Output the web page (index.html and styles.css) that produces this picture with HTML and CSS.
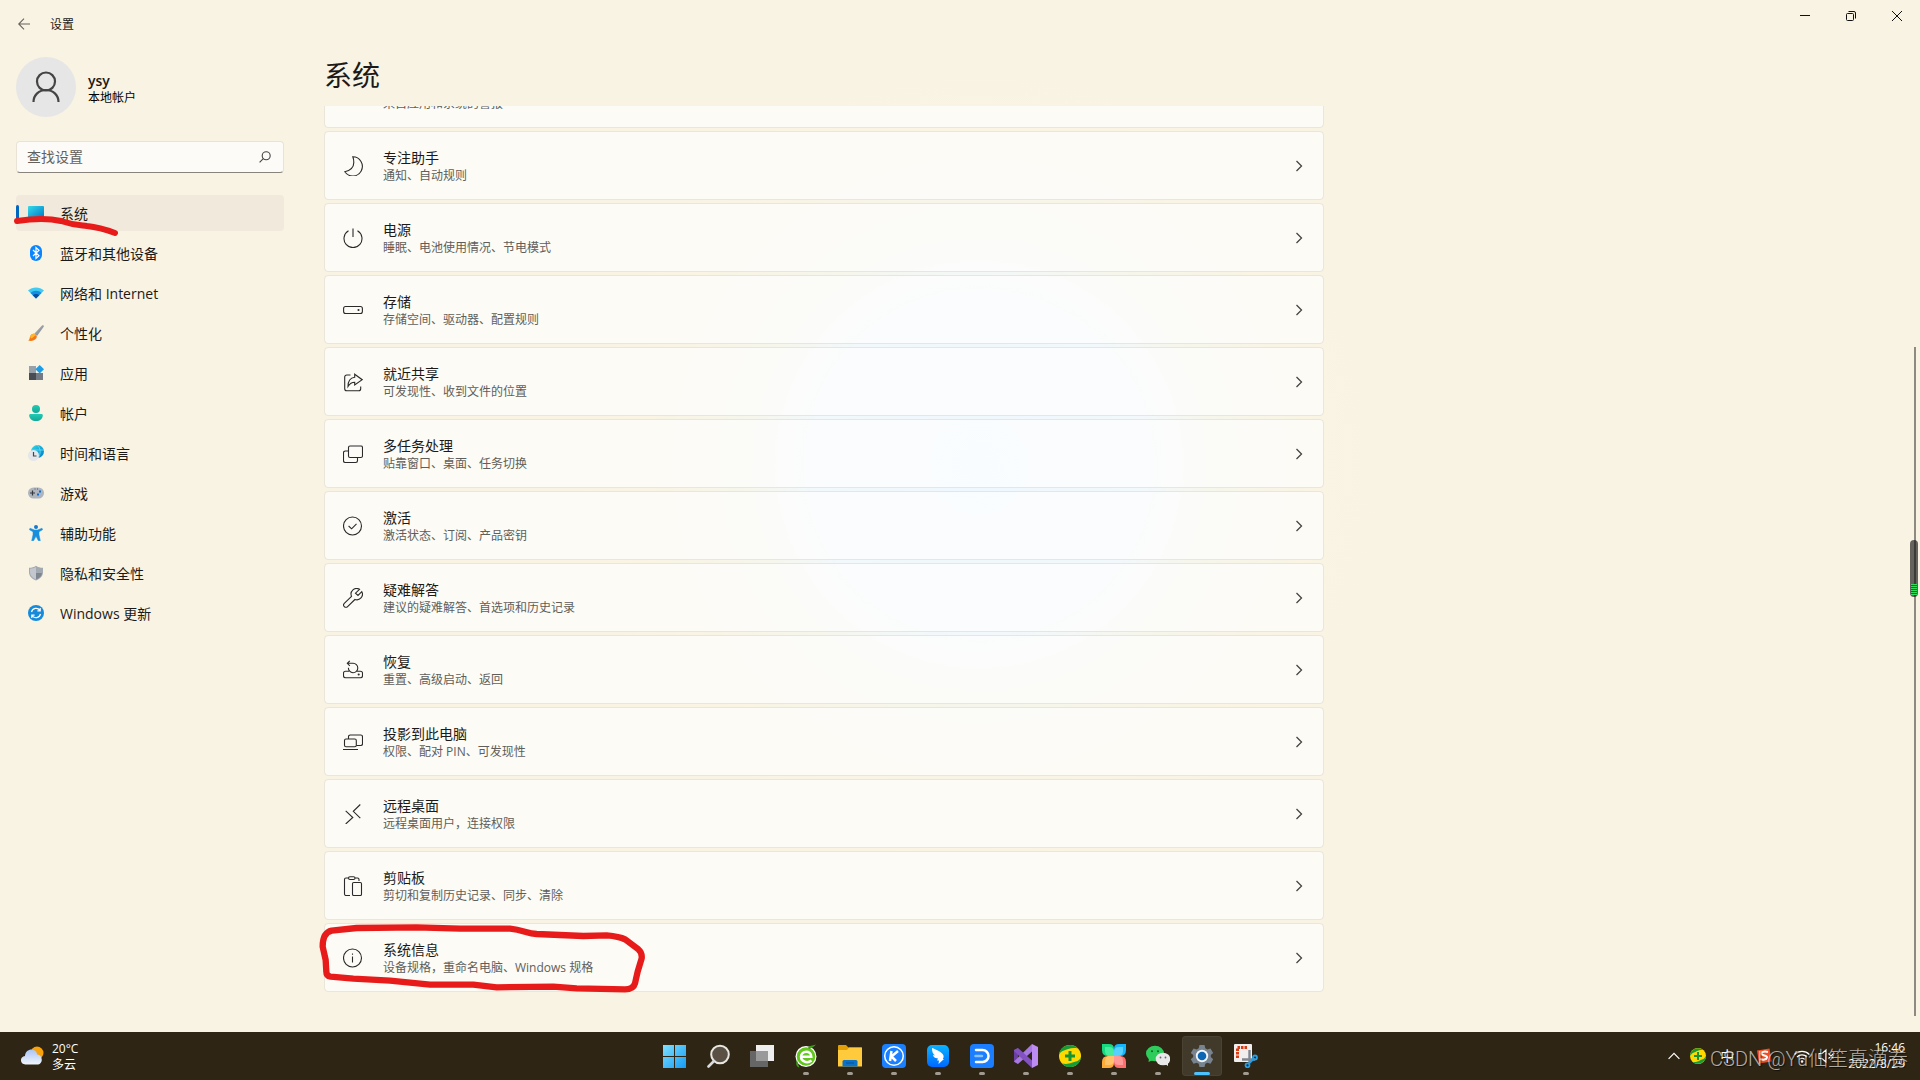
FILE: index.html
```html
<!DOCTYPE html>
<html lang="zh-CN">
<head>
<meta charset="utf-8">
<meta name="viewport" content="width=device-width, initial-scale=1">
<title>设置</title>
<link rel="stylesheet" href="styles.css">
</head>
<body>
<svg class="defs" aria-hidden="true">
  <defs>
    <symbol id="chevron" viewBox="0 0 12 12"><path d="M3.500 1l5 5-5 5" fill="none" stroke="#444" stroke-width="1.300"/></symbol>
    <linearGradient id="g-cyan" x1="0" y1="0" x2="1" y2="1"><stop offset="0" stop-color="#35dbe8"/><stop offset="1" stop-color="#0078c8"/></linearGradient>
    <linearGradient id="g-steel" x1="0" y1="0" x2="1" y2="1"><stop offset="0" stop-color="#b9bfc7"/><stop offset="1" stop-color="#747b85"/></linearGradient>
    <linearGradient id="g-teal" x1="0" y1="0" x2="0" y2="1"><stop offset="0" stop-color="#22cbb4"/><stop offset="1" stop-color="#13a898"/></linearGradient>
    <linearGradient id="g-win" x1="0" y1="0" x2="1" y2="1"><stop offset="0" stop-color="#7fe0ff"/><stop offset="1" stop-color="#149bf5"/></linearGradient>
    <linearGradient id="g-cloud" x1="0" y1="0" x2="0" y2="1"><stop offset="0" stop-color="#a9c4f5"/><stop offset="1" stop-color="#f2f6fd"/></linearGradient>
    <linearGradient id="g-blue" x1="0" y1="0" x2="0" y2="1"><stop offset="0" stop-color="#0ab4ff"/><stop offset="1" stop-color="#0068ff"/></linearGradient>
  </defs>
</svg>

<div class="window">
  <header class="titlebar">
    <button class="back" aria-label="返回"><svg width="12" height="12" viewBox="0 0 12 12"><path d="M12 6H.7M6 .7L.7 6 6 11.300" fill="none" stroke="#66635c" stroke-width="1.100"/></svg></button>
    <span class="app-name">设置</span>
    <div class="controls">
      <button aria-label="最小化"><svg width="10" height="10" viewBox="0 0 10 10"><path d="M0 4.500h10" stroke="#111"/></svg></button>
      <button aria-label="还原"><svg width="10" height="10" viewBox="0 0 10 10"><g fill="none" stroke="#111"><rect x=".5" y="2.500" width="7" height="7" rx="1"/><path d="M2.500.5H8a1.500 1.500 0 0 1 1.500 1.500v5.500"/></g></svg></button>
      <button aria-label="关闭"><svg width="10" height="10" viewBox="0 0 10 10"><path d="M0 0l10 10M10 0L0 10" stroke="#111"/></svg></button>
    </div>
  </header>

  <div class="body">
    <aside class="sidebar">
      <div class="profile">
        <span class="avatar"><svg width="30" height="32" viewBox="0 0 30 32"><g fill="none" stroke="#444" stroke-width="2.200"><circle cx="15" cy="10.500" r="9"/><path d="M2.500 31c0-7 5.500-12 12.500-12s12.500 5 12.500 12"/></g></svg></span>
        <div class="who"><strong class="user">ysy</strong><span class="account">本地帐户</span></div>
      </div>
      <label class="search">
        <input type="text" placeholder="查找设置" aria-label="查找设置">
        <svg width="12" height="12" viewBox="0 0 12 12"><g fill="none" stroke="#444" stroke-width="1.100"><circle cx="7.200" cy="4.800" r="4"/><path d="M4.300 7.700L.6 11.400"/></g></svg>
      </label>
      <nav class="nav">
        <a class="current" href="#system">
          <svg width="16" height="16" viewBox="0 0 16 16"><rect y="1" width="16" height="12" rx="1" fill="url(#g-cyan)"/><path d="M4 13h8v2H4z" fill="#667"/></svg><span>系统</span>
          <svg class="stroke" width="106" height="24" viewBox="0 0 106 24"><path d="M4 6C18 4 34 3 48 6C60 10 66 10 74 11C84 12 94 15 102 18" fill="none" stroke="#e71c1a" stroke-width="6" stroke-linecap="round"/></svg>
        </a>
        <a href="#bluetooth"><svg width="16" height="16" viewBox="0 0 16 16"><rect x="2" width="12" height="16" rx="6" fill="#0a84ff"/><path d="M5 5l6 5.800-3 2.700v-11l3 2.700L5 11" fill="none" stroke="#fff" stroke-width="1.200"/></svg><span>蓝牙和其他设备</span></a>
        <a href="#network"><svg width="16" height="16" viewBox="0 0 16 16"><path d="M0 5.500C4.500 1.500 11.500 1.500 16 5.500L8 13.500z" fill="#41cbf2"/><path d="M2.500 8C5.500 5 10.500 5 13.500 8L8 13.500z" fill="#168ee0"/><path d="M4.700 10.300c1.800-1.800 4.800-1.800 6.600 0L8 13.600z" fill="#0b50a0"/></svg><span>网络和 Internet</span></a>
        <a href="#personal"><svg width="16" height="16" viewBox="0 0 16 16"><path d="M14 .5c1-.8 2.300.2 1.700 1.300L9 11 6.200 8.700z" fill="url(#g-steel)"/><path d="M5.800 8.800L8.800 11.300c.3 3-3.800 5.700-8.600 4.200 1.600-.8 1.200-1.700 1.700-3.500.5-2 2-3.400 3.900-3.200z" fill="#f27a16"/><path d="M5.800 8.800l1.700 1.400-4 3.300-1.500-1.400c.5-2 1.900-3.500 3.800-3.300z" fill="#fdb72d"/></svg><span>个性化</span></a>
        <a href="#apps"><svg width="16" height="16" viewBox="0 0 16 16"><path d="M1 1h7v7H1z" fill="#98a0aa"/><path d="M1 8h7v7H1z" fill="#484d54"/><path d="M8 8h7v7H8z" fill="#747b85"/><path d="M11.700 0L16 4.300 11.700 8.600 7.400 4.300z" fill="#1b9de8"/></svg><span>应用</span></a>
        <a href="#accounts"><svg width="16" height="16" viewBox="0 0 16 16"><circle cx="8" cy="4" r="4" fill="url(#g-teal)"/><path d="M2.500 9h11c1 0 1.300.7 1.300 1.500C14.500 14 12 16 8 16s-6.500-2-6.800-5.500C1.200 9.700 1.500 9 2.500 9z" fill="url(#g-teal)"/></svg><span>帐户</span></a>
        <a href="#time"><svg width="16" height="16" viewBox="0 0 16 16"><circle cx="9.500" cy="6.500" r="6.500" fill="url(#g-cyan)"/><path d="M3 5h13M9 0c4 3 4 9 1 13" fill="none" stroke="#65dff4" stroke-width=".8"/><circle cx="5.500" cy="10.500" r="5.500" fill="#e3e6ea"/><path d="M5.500 7v4h3" fill="none" stroke="#444" stroke-width="1.200"/></svg><span>时间和语言</span></a>
        <a href="#gaming"><svg width="16" height="16" viewBox="0 0 16 16"><rect y="2.500" width="16" height="11" rx="5.500" fill="#aeb5bf"/><path d="M4.500 5.500v5M2 8h5" stroke="#34383d" stroke-width="1.200"/><path d="M6.500 4h1M9 4h1" stroke="#555"/><rect x="11" y="5.500" width="2" height="2" fill="#0c6fd0"/><rect x="9" y="8.500" width="2" height="2" fill="#0c6fd0"/></svg><span>游戏</span></a>
        <a href="#access"><svg width="16" height="16" viewBox="0 0 16 16"><circle cx="8" cy="2" r="2" fill="#147bd1"/><path d="M2 3.200L6.500 5h3L14 3.200l.6 1.500L11 6.700v3l1.300 6h-1.900L8 11.200 5.600 15.700H3.700l1.300-6v-3L1.400 4.700z" fill="#188edf" stroke="#188edf" stroke-width=".5"/></svg><span>辅助功能</span></a>
        <a href="#privacy"><svg width="16" height="16" viewBox="0 0 16 16"><path d="M8 .8c2 1.500 4.200 2 7 2V7c0 4-2.500 6.500-7 8.500C3.500 13.500 1 11 1 7V2.800c2.800 0 5-.5 7-2z" fill="#a3a9b1"/><path d="M8 2v12.500C4 12.500 2 10.500 2 7V3.700C4.500 3.600 6.200 3.100 8 2z" fill="#c2c7cd"/><path d="M8 8h6c-.4 3.200-2.300 5-6 6.500z" fill="#7f868f"/></svg><span>隐私和安全性</span></a>
        <a href="#update"><svg width="16" height="16" viewBox="0 0 16 16"><circle cx="8" cy="8" r="8" fill="#168bdc"/><path d="M3.500 7a4.700 4.700 0 0 1 8.500-1.500M12.500 9A4.700 4.700 0 0 1 4 10.500M12.200 3v2.800H9.400M3.800 13v-2.800h2.800" fill="none" stroke="#fff" stroke-width="1.200"/></svg><span>Windows 更新</span></a>
      </nav>
    </aside>

    <main class="main">
      <h1>系统</h1>
      <div class="list">
        <button class="card"><span class="icon"></span><span class="text"><b>通知</b><small>来自应用和系统的警报</small></span><svg class="go"><use href="#chevron"/></svg></button>
        <button class="card"><svg class="icon" viewBox="0 0 20 20"><path d="M9.800.8A9.600 9.600 0 1 1 1.800 15.800C7 14.500 10.800 11 10.800 6.500c0-2.500-.3-4-1-5.700z"/></svg><span class="text"><b>专注助手</b><small>通知、自动规则</small></span><svg class="go"><use href="#chevron"/></svg></button>
        <button class="card"><svg class="icon" viewBox="0 0 20 20"><path d="M10 .5v8.500M5.500 2.800a9 9 0 1 0 9 0"/></svg><span class="text"><b>电源</b><small>睡眠、电池使用情况、节电模式</small></span><svg class="go"><use href="#chevron"/></svg></button>
        <button class="card"><svg class="icon" viewBox="0 0 20 20"><rect x=".6" y="6.500" width="18.800" height="7" rx="2"/><circle cx="15.500" cy="10" r=".5"/></svg><span class="text"><b>存储</b><small>存储空间、驱动器、配置规则</small></span><svg class="go"><use href="#chevron"/></svg></button>
        <button class="card"><svg class="icon" viewBox="0 0 20 20"><path d="M7.500 3H3.700a2 2 0 0 0-2 2v11.800a2 2 0 0 0 2 2h12a2 2 0 0 0 2-2V14.500M11.700 2.200l7.500 5.500-7.500 5.300V10.300c-3.200 0-5 1.500-6.700 4.200 0-5.500 2.500-8.800 6.700-9.300z"/></svg><span class="text"><b>就近共享</b><small>可发现性、收到文件的位置</small></span><svg class="go"><use href="#chevron"/></svg></button>
        <button class="card"><svg class="icon" viewBox="0 0 20 20"><rect x="5.500" y="2" width="14" height="11.500" rx="1.500"/><path d="M5.500 7H2.200A1.700 1.700 0 0 0 .5 8.700v8.100a1.700 1.700 0 0 0 1.700 1.700h10.600a1.700 1.700 0 0 0 1.700-1.700V13.500"/></svg><span class="text"><b>多任务处理</b><small>贴靠窗口、桌面、任务切换</small></span><svg class="go"><use href="#chevron"/></svg></button>
        <button class="card"><svg class="icon" viewBox="0 0 20 20"><circle cx="9.500" cy="10" r="9"/><path d="M5.600 10l3 2.800 4.900-5"/></svg><span class="text"><b>激活</b><small>激活状态、订阅、产品密钥</small></span><svg class="go"><use href="#chevron"/></svg></button>
        <button class="card"><svg class="icon" viewBox="0 0 20 20"><path d="M16.500 1.300A5.600 5.600 0 0 0 8.500 8.300L1.300 15.300a2.200 2.200 0 0 0 3.300 3.300L11.900 11.500A5.600 5.600 0 0 0 18.800 3.700L15 7.500 12.500 5.200z"/></svg><span class="text"><b>疑难解答</b><small>建议的疑难解答、首选项和历史记录</small></span><svg class="go"><use href="#chevron"/></svg></button>
        <button class="card"><svg class="icon" viewBox="0 0 20 20"><path d="M6 11.200H2.500a2 2 0 0 0-2 2v2.600a2 2 0 0 0 2 2h15a2 2 0 0 0 2-2v-2.600a2 2 0 0 0-2-2H14M6.800.8L4.300 3.300l2.500 2.500M4.300 3.300H10a4.700 4.700 0 1 1-4.600 4.500"/><circle cx="15.700" cy="14.500" r=".5"/></svg><span class="text"><b>恢复</b><small>重置、高级启动、返回</small></span><svg class="go"><use href="#chevron"/></svg></button>
        <button class="card"><svg class="icon" viewBox="0 0 20 20"><rect x="1.500" y="7" width="11.800" height="7.800" rx="1.500"/><path d="M5.500 7V4.700A1.700 1.700 0 0 1 7.200 3h10.600a1.700 1.700 0 0 1 1.700 1.700v7.100a1.700 1.700 0 0 1-1.700 1.700h-4.500M0 17.500h15"/></svg><span class="text"><b>投影到此电脑</b><small>权限、配对 PIN、可发现性</small></span><svg class="go"><use href="#chevron"/></svg></button>
        <button class="card"><svg class="icon" viewBox="0 0 20 20"><path d="M2.700 6.800l7.100 6.700-7.100 6.500M17.300.5l-7 6.800 7 6.900"/></svg><span class="text"><b>远程桌面</b><small>远程桌面用户，连接权限</small></span><svg class="go"><use href="#chevron"/></svg></button>
        <button class="card"><svg class="icon" viewBox="0 0 20 20"><rect x="5.500" y=".7" width="6.500" height="2.800" rx="1.400"/><path d="M5.500 2H3a1.500 1.500 0 0 0-1.500 1.500V18A1.500 1.500 0 0 0 3 19.500h4M12 2h2.500A1.500 1.500 0 0 1 16 3.500V5"/><rect x="9.500" y="6.500" width="9" height="13" rx="1.200"/></svg><span class="text"><b>剪贴板</b><small>剪切和复制历史记录、同步、清除</small></span><svg class="go"><use href="#chevron"/></svg></button>
        <button class="card"><svg class="icon" viewBox="0 0 20 20"><circle cx="9.500" cy="10" r="9"/><path d="M9.500 8.500v6M9.500 5.500v1.200"/></svg><span class="text"><b>系统信息</b><small>设备规格，重命名电脑、Windows 规格</small></span><svg class="go"><use href="#chevron"/></svg>
          <svg class="ring" width="333" height="79" viewBox="12 657 999 237"><path d="M140 684L320 682 450 686 600 686C640 690 650 700 680 702L820 708 890 706C915 708 930 710 945 718L985 748Q997 758 995 775L983 815 975 850Q970 868 945 868L800 865 730 860 560 862 490 854 360 854 240 842 130 836 62 830Q49 828 49 815L47 780 38 740Q38 698 65 692Z" fill="none" stroke="#e71c1a" stroke-width="19" stroke-linejoin="round"/></svg>
        </button>
      </div>
    </main>
  </div>

  <div class="scrollbar"><span class="gauge"></span></div>
</div>

<footer class="taskbar">
  <button class="weather">
    <svg width="24" height="20" viewBox="0 0 24 20"><circle cx="17" cy="7" r="6.500" fill="#f9a20b"/><path d="M5.500 18.500C-.5 18.500-.5 10.500 5 10 5.500 2 16 1.500 17.200 8.500c6 .5 6.300 10-.2 10z" fill="url(#g-cloud)"/></svg>
    <span class="forecast"><span>20°C</span><span>多云</span></span>
  </button>
  <div class="apps">
    <button aria-label="开始"><svg viewBox="0 0 24 24"><path d="M1 1h11v11H1zM13 1h11v11H13zM1 13h11v11H1zM13 13h11v11H13z" fill="url(#g-win)"/></svg></button>
    <button aria-label="搜索"><svg viewBox="0 0 24 24"><circle cx="14" cy="10.500" r="8.800" fill="#5a5144" stroke="#e8e6e2" stroke-width="2"/><path d="M8 17l-5.500 5.500" stroke="#d8dadd" stroke-width="2.600" stroke-linecap="round"/></svg></button>
    <button aria-label="任务视图"><svg viewBox="0 0 24 24"><rect x="6" y="1" width="18" height="16" fill="#eee"/><rect x="0" y="7" width="18" height="16" fill="#666"/><rect x="6" y="7" width="12" height="10" fill="#999"/></svg></button>
    <button class="open" aria-label="浏览器"><svg viewBox="0 0 24 24"><circle cx="12" cy="12.500" r="10.500" fill="#fff"/><circle cx="12" cy="12.500" r="9.300" fill="#62c61c"/><path d="M17.500 16.500C13 20 7 17.500 7 12.500 7.500 6.500 17 6 17.300 12.800H8" fill="none" stroke="#fff" stroke-width="2.500"/><path d="M14 3C17 1.500 19.500 1 22 .5 20 3 18 4 15 5zM5.500 23.500C2 23 1.500 19 3 15.500 3.500 19 4.500 21 5.500 23.500z" fill="#3c9d19"/></svg></button>
    <button class="open" aria-label="文件资源管理器"><svg viewBox="0 0 24 24"><path d="M0 2q0-1 1-1h7l2.500 2.500H23q1 0 1 1V22H0z" fill="#e2a008"/><path d="M0 6h9l2-2.500h13V22.500H0z" fill="#ffca3c"/><path d="M4.500 22.500v-5q0-1.500 1.500-1.500h12q1.500 0 1.500 1.500v5z" fill="#0c72c8"/><path d="M8 19h8" stroke="#074f96"/></svg></button>
    <button class="open" aria-label="酷狗音乐"><svg viewBox="0 0 24 24"><rect width="24" height="24" rx="4" fill="#1a80ff"/><circle cx="12" cy="12" r="9.300" fill="none" stroke="#fff" stroke-width="1.500"/><path d="M9.500 7L8 17M16 7l-6.500 5.500L14 17" fill="none" stroke="#fff" stroke-width="2.500"/></svg></button>
    <button class="open" aria-label="钉钉"><svg viewBox="0 0 24 24"><rect x="1" y="1" width="22" height="22" rx="5" fill="url(#g-blue)"/><path d="M6 4c4 1.500 9 3.500 11 6.500 1 1.500.7 3-.2 4.500h1.200l-5.500 5 .5-3.500h-2l1-2C8.500 14 7 12.500 7 11l2 .5C7 10 6 8 6 4z" fill="#fff"/></svg></button>
    <button class="open" aria-label="文档"><svg viewBox="0 0 24 24"><rect width="24" height="24" rx="4" fill="#1b7eff"/><path d="M6 6h6.500a6 6 0 0 1 0 12H6" fill="none" stroke="#fff" stroke-width="2.500" stroke-linecap="round"/><path d="M5.500 12H12" stroke="#8ac2ff" stroke-width="2.500" stroke-linecap="round"/></svg></button>
    <button class="open" aria-label="Visual Studio"><svg viewBox="0 0 24 24"><path d="M18 0l6 3v18l-6 3z" fill="#bd8cf2"/><path d="M0 6l4-2v16l-4-2z" fill="#6b3fa0"/><path d="M4 20L18 7.500V0L0 17.500z" fill="#a678e0"/><path d="M0 6l4-2 14 12.500V24L0 7z" fill="#8252c0"/></svg></button>
    <button class="open" aria-label="安全卫士"><svg viewBox="0 0 24 24"><circle cx="12" cy="12" r="11" fill="#ffd800"/><path d="M1 11A11 11 0 0 1 20 4.500C13 3 9 6 6 6.500 3 7 2 9 1 11zM23 13A11 11 0 0 1 4 19.500C11 21 15 18 18 17.500c3-.5 4-2.500 5-4.500z" fill="#159b3a"/><path d="M12 7v10M7 12h10" stroke="#169332" stroke-width="3"/></svg></button>
    <button class="open" aria-label="应用中心"><svg viewBox="0 0 24 24"><path d="M0 0h7q5 0 5 5v7H6q-6 0-6-6z" fill="#17d980"/><path d="M24 0h-7q-5 0-5 5v7h6q6 0 6-6z" fill="#16b6ff"/><path d="M0 24h7q5 0 5-5v-7H6q-6 0-6 6z" fill="#ffac36"/><path d="M24 24h-7q-5 0-5-5v-7h6q6 0 6 6z" fill="#ff6f70"/><path d="M3 3h4q5 0 5 5v4H8q-5 0-5-5z" fill="#48ec9d"/><path d="M21 3h-4q-5 0-5 5v4h4q5 0 5-5z" fill="#57d1ff"/><path d="M3 21h4q5 0 5-5v-4H8q-5 0-5 5z" fill="#ffc46b"/><path d="M21 21h-4q-5 0-5-5v-4h4q5 0 5 5z" fill="#ff9a98"/></svg></button>
    <button class="open" aria-label="微信"><svg viewBox="0 0 24 24"><ellipse cx="9" cy="9.500" rx="9" ry="7.800" fill="#2ecc5a"/><path d="M3 14l-.5 4L7 16z" fill="#2ecc5a"/><circle cx="6" cy="7.300" r="1" fill="#165d29"/><circle cx="12" cy="7.300" r="1" fill="#165d29"/><ellipse cx="17" cy="15" rx="7.300" ry="6.300" fill="#e8e8e8"/><path d="M19 20l3 2v-4z" fill="#e8e8e8"/><circle cx="14.500" cy="13.500" r=".9" fill="#666"/><circle cx="19.500" cy="13.500" r=".9" fill="#666"/></svg></button>
    <button class="open active" aria-label="设置"><svg viewBox="0 0 24 24"><path d="M9.500 1h5l.8 3.300 2 1.100 3.200-1 2.700 4.500L20.800 11v2l2.400 2.200-2.700 4.500-3.200-1-2 1.100L14.500 23h-5l-.8-3.200-2-1.100-3.200 1L.8 15.200 3.200 13v-2L.8 8.900l2.700-4.500 3.200 1 2-1.100z" fill="#788390"/><circle cx="12" cy="12" r="6.200" fill="#f2f4f6"/><circle cx="12" cy="12" r="4.300" fill="#0d66b4"/></svg></button>
    <button class="open" aria-label="截图工具"><svg viewBox="0 0 24 24"><rect width="18" height="18" rx="1" fill="#f0efee"/><path d="M3.500 14V3.500H14" fill="none" stroke="#d83b12" stroke-width="3" stroke-dasharray="2.500 1"/><path d="M15.500 6v13M8 15.500h13" stroke="#7f8890" stroke-width="2.400"/><g fill="none" stroke="#24a0e8" stroke-width="1.800"><circle cx="21" cy="13.500" r="2"/><circle cx="13.500" cy="21.300" r="2"/><path d="M15 19.500l4.500-4.500"/></g></svg></button>
  </div>
  <div class="tray">
    <button aria-label="显示隐藏的图标"><svg width="12" height="8" viewBox="0 0 12 8"><path d="M.6 6.800L6 1.400l5.400 5.400" fill="none" stroke="#fff" stroke-width="1.200"/></svg></button>
    <button aria-label="安全防护"><svg width="16" height="16" viewBox="0 0 16 16"><circle cx="8" cy="8" r="8" fill="#ffd800"/><path d="M0 8a8 8 0 0 1 13-6C8 1.500 6 4 4 4.500 2 5 1 6.500 0 8zM16 8a8 8 0 0 1-13 6c5 .5 7-2 9-2.500 2-.5 3-2 4-3.500z" fill="#159b3a"/><path d="M8 4v8M4 8h8" stroke="#169332" stroke-width="2"/></svg></button>
    <button class="ime">中</button>
    <button class="sogou" aria-label="输入法"><svg width="16" height="16" viewBox="0 0 16 16"><path d="M1 2.500L13.500.5l2 13L3 15.500z" fill="#f04e23"/><path d="M12 4C8 3 5 4 5.500 6s6 1 5.500 3.500-4 2.500-7 1.500" fill="none" stroke="#fff" stroke-width="2"/></svg></button>
    <button class="net" aria-label="网络和音量"><svg width="16" height="16" viewBox="0 0 16 16"><g fill="none" stroke="#fff" stroke-width="1.200"><path d="M.6 6.500a10.500 10.500 0 0 1 14.800 0M3 9a7 7 0 0 1 10 0M5.400 11.400a3.700 3.700 0 0 1 5.200 0"/></g><circle cx="8" cy="13.500" r="1.300" fill="#fff"/></svg><svg width="16" height="16" viewBox="0 0 16 16"><path d="M1 5.500h3L8 2v12l-4-3.500H1zM10.500 5.500l5 5M15.500 5.500l-5 5" fill="none" stroke="#fff" stroke-width="1.100"/></svg></button>
    <button class="clock"><span>16:46</span><span>2022/8/29</span></button>
  </div>
  <span class="watermark">CSDN @Yu仙笙真滴卷</span>
</footer>
</body>
</html>
```
FILE: styles.css
```css
* { box-sizing: border-box; }

body {
  margin: 0;
  height: 100vh;
  display: flex;
  flex-direction: column;
  overflow: hidden;
  background: #f9f3e3;
  color: #1b1a18;
  font: 14px/20px "Open Sans", "Noto Sans CJK SC", sans-serif;
}

button {
  margin: 0;
  padding: 0;
  border: 0;
  background: none;
  color: inherit;
  font: inherit;
  text-align: left;
}

svg { display: block; flex: none; }

.defs { position: absolute; width: 0; height: 0; }

.window {
  position: relative;
  flex: 1;
  min-height: 0;
  display: flex;
  flex-direction: column;
  background: radial-gradient(circle at 51% 45%, #eff8ff 0, #f2f8fb 170px, #f6f6ec 230px, #f9f4e4 330px, #f9f3e3 400px);
}

/* Title bar */
.titlebar {
  display: flex;
  align-items: center;
  height: 48px;
  padding-left: 18px;
  font-size: 12px;
}
.back { margin-right: 20px; }
.app-name { padding-top: 2px; }
.controls {
  display: flex;
  align-self: flex-start;
  margin-left: auto;
}
.controls button {
  display: grid;
  place-items: center;
  width: 46px;
  height: 32px;
}

.body {
  flex: 1;
  min-height: 0;
  display: flex;
  gap: 24px;
  padding-left: 16px;
}

/* Sidebar */
.sidebar { flex: 0 0 268px; padding-top: 9px; }
.profile { display: flex; align-items: center; gap: 12px; }
.avatar {
  display: grid;
  place-items: center;
  width: 60px;
  height: 60px;
  border-radius: 50%;
  background: #e6e6e6;
}
.who { padding-top: 4px; }
.user, .account { display: block; line-height: 16px; }
.user { font-weight: 600; }
.account { padding-top: 1px; font-size: 12px; color: #000; }
.search {
  display: flex;
  align-items: center;
  height: 32px;
  margin: 24px 0 22px;
  padding: 0 12px 0 10px;
  border: 1px solid #e9e3d5;
  border-bottom-color: #88847b;
  border-radius: 4px;
  background: #fdfbf7;
}
.search input {
  flex: 1;
  min-width: 0;
  padding: 0;
  border: 0;
  outline: 0;
  background: none;
  font: inherit;
}
.search input::placeholder { color: #63615c; opacity: 1; }

.nav { display: flex; flex-direction: column; gap: 4px; }
.nav a {
  position: relative;
  display: flex;
  align-items: center;
  gap: 16px;
  height: 36px;
  padding-left: 12px;
  border-radius: 4px;
  color: inherit;
  text-decoration: none;
}
.nav span { padding-top: 2px; }
.nav .current { background: #f0e9dc; }
.nav .current::before {
  content: "";
  position: absolute;
  left: 0;
  width: 3px;
  height: 16px;
  border-radius: 2px;
  background: #0067c0;
}
.stroke { position: absolute; left: -3px; top: 20px; }

/* Settings list */
.main {
  flex: 1;
  min-width: 0;
  display: flex;
  flex-direction: column;
}
h1 {
  margin: 0;
  padding: 7px 16px 11px;
  font-size: 28px;
  font-weight: 400;
  line-height: 40px;
}
.list {
  flex: 1;
  min-height: 0;
  display: flex;
  flex-direction: column;
  justify-content: flex-end;
  gap: 3px;
  padding: 0 16px 40px;
  overflow: hidden;
}
.card {
  position: relative;
  flex: none;
  display: flex;
  align-items: center;
  gap: 20px;
  width: 100%;
  max-width: 1000px;
  height: 69px;
  padding: 0 18px;
  border: 1px solid #ebe6da;
  border-radius: 4px;
  background: rgba(254, 254, 254, .7);
  background-clip: padding-box;
}
.icon {
  width: 20px;
  height: 20px;
  fill: none;
  stroke: #2a2a2a;
  stroke-width: 1.1;
}
.text { flex: 1; }
.text b, .text small { display: block; font-weight: 400; }
.text small { font-size: 12px; line-height: 16px; color: #605e5a; }
.go { width: 12px; height: 12px; }
.ring { position: absolute; left: -11px; top: -5px; }

.scrollbar {
  position: absolute;
  top: 347px;
  right: 4px;
  bottom: 16px;
  width: 2px;
  background: #8e8a82;
}
.gauge {
  position: absolute;
  top: 193px;
  left: -4px;
  width: 8px;
  height: 57px;
  border-radius: 4px;
  background:
    repeating-linear-gradient(#2fdc5c 0 1px, #4c4a47 1px 2px) 50% 44px / 6px 11px no-repeat,
    linear-gradient(90deg, #65625d 50%, #3d3b38 50% 75%, #65625d 75%);
}

/* Taskbar */
.taskbar {
  position: relative;
  display: grid;
  grid-template-columns: 1fr auto 1fr;
  align-items: center;
  height: 48px;
  background: #2e2514;
  color: #fff;
  font-size: 12px;
  line-height: 16px;
}
.weather { display: flex; align-items: center; gap: 8px; padding-left: 20px; }
.forecast { padding-top: 2px; }
.forecast span, .clock span { display: block; }
.apps { display: flex; gap: 4px; }
.apps button {
  position: relative;
  display: grid;
  place-items: center;
  width: 40px;
  height: 40px;
  border-radius: 4px;
}
.apps svg { width: 24px; height: 24px; }
.apps .open::after {
  content: "";
  position: absolute;
  bottom: 1px;
  left: 17px;
  width: 6px;
  height: 3px;
  border-radius: 2px;
  background: #a19a90;
}
.apps .active { background: #413929; box-shadow: inset 0 0 0 1px #4a4233; }
.apps .active::after { left: 12px; width: 16px; background: #4cc2ff; }
.tray {
  display: flex;
  align-items: center;
  justify-content: flex-end;
  padding-right: 15px;
}
.tray button + button { margin-left: 10px; }
.tray .ime { margin-left: 14px; font-size: 14px; }
.tray .sogou { margin-left: 22px; }
.tray .net { display: flex; gap: 8px; margin-left: 22px; }
.tray .clock { margin-left: 14px; text-align: right; }
.watermark {
  position: absolute;
  right: 12px;
  top: 13px;
  color: rgba(255, 255, 255, .65);
  font: 300 20px/28px Roboto, "Noto Sans CJK SC", sans-serif;
  text-shadow: 1px 1px 1px rgba(0, 0, 0, .6);
  white-space: nowrap;
  pointer-events: none;
}
```
